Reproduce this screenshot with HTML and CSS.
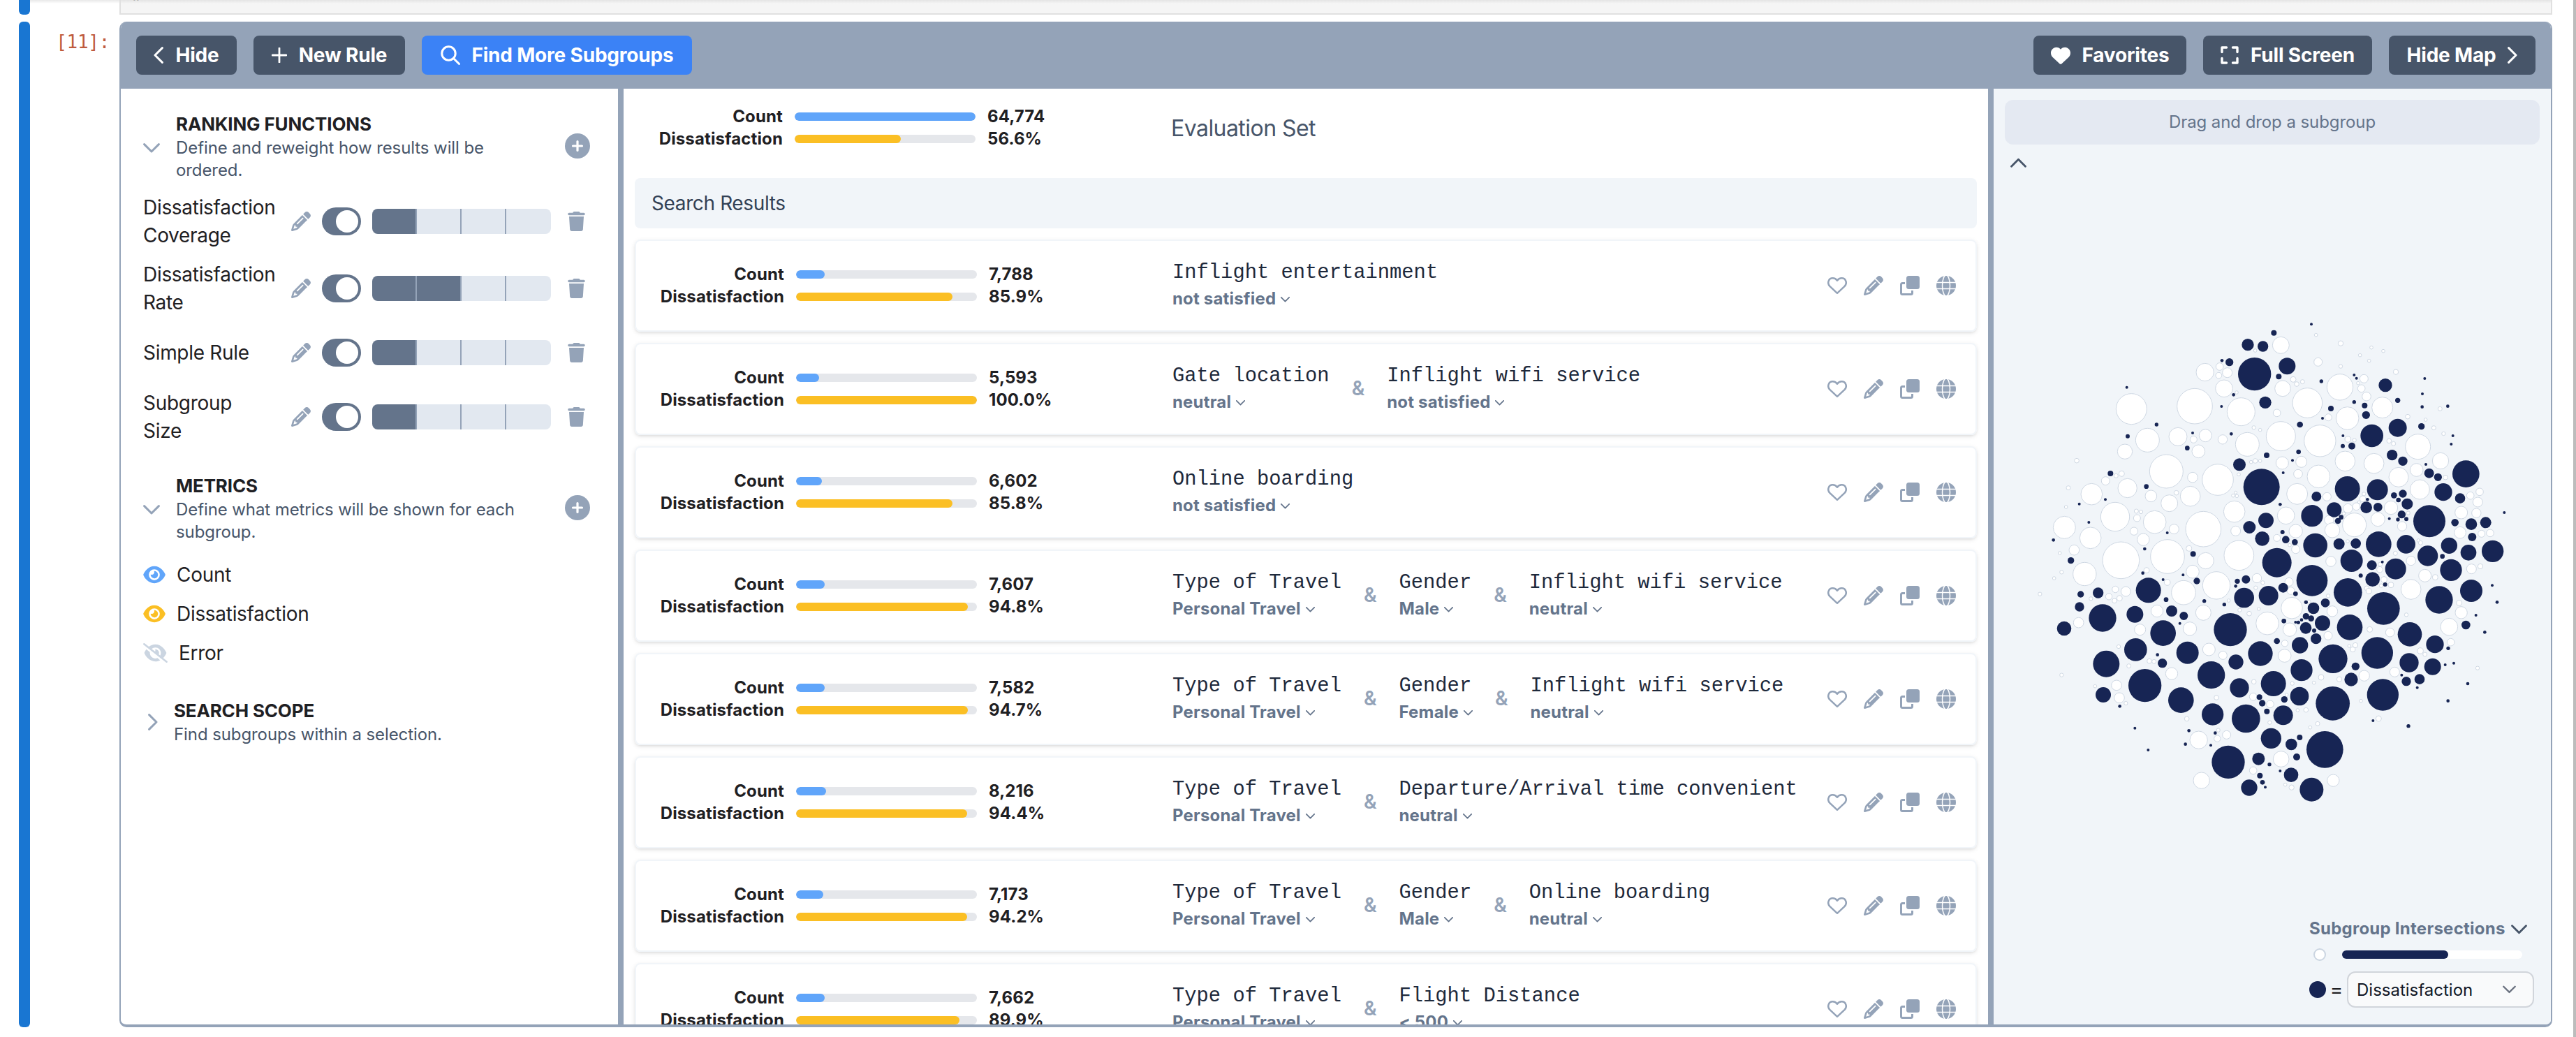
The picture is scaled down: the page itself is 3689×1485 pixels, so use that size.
FILE: index.html
```html
<!DOCTYPE html>
<html lang="en">
<head>
<meta charset="utf-8">
<title>Subgroup explorer</title>
<link rel="stylesheet" href="styles.css">
</head>
<body>
<svg class="sprite" width="0" height="0">
  <symbol id="heart" viewBox="0 0 28 28"><path d="M14 24.8 3.6 15.1C-.9 10.700 1.500 3.300 7.600 3.300c2.700 0 4.900 1.300 6.400 3.500 1.500-2.200 3.700-3.500 6.400-3.500 6.100 0 8.500 7.400 4 11.800z" fill="none" stroke="currentColor" stroke-width="2.500" stroke-linejoin="round"/></symbol>
  <symbol id="heart-solid" viewBox="0 32 512 448"><path d="M47.600 300.400L228.300 469.100c7.500 7 17.400 10.900 27.700 10.900s20.200-3.900 27.700-10.900L464.400 300.400c30.400-28.300 47.600-68 47.600-109.500v-5.800c0-69.900-50.500-129.500-119.400-141C347 36.500 300.600 51.400 268 84L256 96 244 84c-32.600-32.600-79-47.500-124.600-39.900C50.500 55.600 0 115.200 0 185.100v5.800c0 41.500 17.200 81.200 47.600 109.500z"/></symbol>
  <symbol id="pencil" viewBox="0 0 512 512"><path d="M410.3 231l11.3-11.3-33.9-33.9-62.1-62.1L291.7 89.8l-11.3 11.3-22.6 22.6L58.6 322.9c-10.4 10.4-18 23.3-22.2 37.4L1 480.7c-2.5 8.4-.2 17.5 6.1 23.7s15.3 8.5 23.7 6.1l120.3-35.4c14.1-4.2 27-11.8 37.4-22.2L387.7 253.7 410.3 231zM160 399.4l-9.100 22.700c-4 3.100-8.500 5.400-13.300 6.900L59.400 452l23-78.100c1.400-4.900 3.800-9.400 6.900-13.300l22.700-9.100v32c0 8.800 7.200 16 16 16h32zM362.7 18.7L348.3 33.2 325.7 55.8 314.3 67.1l33.9 33.9 62.1 62.1 33.9 33.9 11.3-11.3 22.6-22.600 14.500-14.500c25-25 25-65.500 0-90.500L453.300 18.700c-25-25-65.500-25-90.500 0zm-47.400 168l-144 144c-6.200 6.200-16.400 6.200-22.600 0s-6.200-16.400 0-22.600l144-144c6.200-6.200 16.400-6.200 22.600 0s6.200 16.400 0 22.600z"/></symbol>
  <symbol id="clone" viewBox="0 0 28 28"><rect x="9" y="0" width="19" height="19" rx="3.500"/><path d="M7 10.500H3.500a2 2 0 0 0-2 2v12a2 2 0 0 0 2 2h12a2 2 0 0 0 2-2V21" fill="none" stroke="currentColor" stroke-width="3"/></symbol>
  <symbol id="globe" viewBox="0 0 28 28"><circle cx="14" cy="14" r="14"/><g fill="none" stroke="#fff" stroke-width="1.500"><ellipse cx="14" cy="14" rx="5.500" ry="15"/><path d="M0 9.500H28M0 18.500H28"/></g></symbol>
  <symbol id="trash" viewBox="0 0 448 512"><path d="M135.200 17.700L128 32H32C14.300 32 0 46.300 0 64S14.300 96 32 96H416c17.700 0 32-14.300 32-32s-14.300-32-32-32H320l-7.200-14.300C307.400 6.800 296.300 0 284.200 0H163.800c-12.100 0-23.200 6.800-28.600 17.700zM416 128H32L53.200 467c1.600 25.300 22.600 45 47.900 45H346.900c25.300 0 46.300-19.700 47.900-45L416 128z"/></symbol>
  <symbol id="plus-circle" viewBox="0 0 36 36"><circle cx="18" cy="18" r="18"/><path d="M18 11.500v13M11.500 18h13" stroke="#fff" stroke-width="3.200" stroke-linecap="round"/></symbol>
  <symbol id="eye" viewBox="0 0 576 512"><path d="M288 32c-80.800 0-145.500 36.800-192.600 80.600C48.600 156 17.300 208 2.500 243.700c-3.300 7.900-3.300 16.700 0 24.600C17.300 304 48.600 356 95.400 399.400C142.500 443.200 207.200 480 288 480s145.500-36.800 192.600-80.600c46.800-43.500 78.100-95.400 93-131.100c3.300-7.900 3.300-16.700 0-24.600c-14.900-35.700-46.200-87.700-93-131.100C433.500 68.800 368.800 32 288 32zM144 256a144 144 0 1 1 288 0 144 144 0 1 1 -288 0zm144-64c0 35.300-28.700 64-64 64c-7.100 0-13.900-1.200-20.300-3.300c-5.500-1.800-11.900 1.600-11.700 7.400c.3 6.900 1.300 13.800 3.200 20.700c13.700 51.200 66.400 81.600 117.600 67.900s81.600-66.400 67.900-117.600c-11.100-41.500-47.800-69.400-88.600-71.100c-5.800-.2-9.200 6.100-7.400 11.700c2.100 6.400 3.300 13.200 3.300 20.300z"/></symbol>
  <symbol id="eye-slash" viewBox="0 0 640 512"><path d="M38.800 5.100C28.400-3.100 13.300-1.200 5.100 9.200S-1.200 34.700 9.200 42.900l592 464c10.400 8.200 25.500 6.300 33.700-4.100s6.300-25.500-4.100-33.700L525.600 386.700c39.600-40.600 66.400-86.100 79.900-118.400c3.300-7.900 3.300-16.700 0-24.600c-14.900-35.700-46.200-87.700-93-131.100C465.500 68.800 400.800 32 320 32c-68.200 0-125 26.300-169.300 60.800L38.800 5.100zM223.100 149.500C248.600 126.200 282.700 112 320 112c79.500 0 144 64.500 144 144c0 24.900-6.300 48.300-17.400 68.700L408 294.500c8.400-19.300 10.600-41.400 4.800-63.300c-11.100-41.500-47.800-69.400-88.600-71.100c-5.800-.2-9.200 6.100-7.400 11.700c2.100 6.400 3.300 13.200 3.300 20.300c0 10.200-2.400 19.800-6.600 28.300l-90.300-70.800zM373 389.900c-16.400 6.500-34.300 10.100-53 10.100c-79.500 0-144-64.500-144-144c0-6.900 .5-13.600 1.400-20.200L83.100 161.500C60.300 191.200 44 220.800 34.500 243.700c-3.300 7.900-3.300 16.700 0 24.600c14.900 35.700 46.200 87.700 93 131.100C174.500 443.200 239.200 480 320 480c47.800 0 89.900-12.900 126.200-32.500L373 389.900z"/></symbol>
  <symbol id="caret" viewBox="0 0 24 14"><path d="M1.600 1.600 12 12 22.400 1.600" fill="none" stroke="currentColor" stroke-width="3" stroke-linecap="round" stroke-linejoin="round"/></symbol>
  <symbol id="caret-small" viewBox="0 0 13 8"><path d="M.8.800 6.500 6.700 12.200.800" fill="none" stroke="currentColor" stroke-width="1.700" stroke-linecap="round" stroke-linejoin="round"/></symbol>
  <symbol id="caret-right" viewBox="0 0 14 24"><path d="M1.600 1.600 12 12 1.600 22.400" fill="none" stroke="currentColor" stroke-width="3" stroke-linecap="round" stroke-linejoin="round"/></symbol>
  <symbol id="caret-left" viewBox="0 0 14 24"><path d="M12.400 1.600 2 12 12.400 22.400" fill="none" stroke="currentColor" stroke-width="3" stroke-linecap="round" stroke-linejoin="round"/></symbol>
  <symbol id="plus" viewBox="0 0 22 22"><path d="M11 1v20M1 11h20" stroke="currentColor" stroke-width="2.800" stroke-linecap="round"/></symbol>
  <symbol id="search" viewBox="0 0 28 28"><g fill="none" stroke="currentColor" stroke-width="3" stroke-linecap="round"><circle cx="11.500" cy="11.500" r="9.700"/><path d="M18.700 18.700 26.500 26.500"/></g></symbol>
  <symbol id="expand" viewBox="0 0 26 26"><path d="M2 8.500V2h6.500M17.500 2H24v6.500M24 17.500V24h-6.500M8.500 24H2v-6.500" fill="none" stroke="currentColor" stroke-width="3.400" stroke-linecap="round" stroke-linejoin="round"/></symbol>
</svg>

<div class="notebook">
  <div class="cell cell-prev">
    <div class="marker"></div>
    <div class="input"><span class="code">"</span></div>
  </div>
  <div class="cell cell-current">
    <div class="marker"></div>
    <div class="prompt">[11]:</div>
    <div class="widget">
      <div class="toolbar">
        <button class="btn w-hide"><svg class="i-side"><use href="#caret-left"/></svg>Hide</button>
        <button class="btn w-rule"><svg class="i-plus"><use href="#plus"/></svg>New Rule</button>
        <button class="btn primary w-find"><svg class="i-28"><use href="#search"/></svg>Find More Subgroups</button>
        <span class="spacer"></span>
        <button class="btn w-fav"><svg class="i-heart"><use href="#heart-solid"/></svg>Favorites</button>
        <button class="btn w-full"><svg class="i-26"><use href="#expand"/></svg>Full Screen</button>
        <button class="btn w-map">Hide Map<svg class="i-side"><use href="#caret-right"/></svg></button>
      </div>
      <div class="panels">
        <aside class="sidebar">
          <div class="section-head">
            <svg class="toggle-caret"><use href="#caret"/></svg>
            <div class="section-text"><h2>Ranking Functions</h2><p>Define and reweight how results will be ordered.</p></div>
            <svg class="add"><use href="#plus-circle"/></svg>
          </div>
          <div class="rankings">
            <div class="ranking"><span class="name">Dissatisfaction Coverage</span><svg class="i-28"><use href="#pencil"/></svg><span class="switch"></span><span class="weights"><i class="on"></i><i></i><i></i><i></i></span><svg class="i-trash"><use href="#trash"/></svg></div>
            <div class="ranking"><span class="name">Dissatisfaction Rate</span><svg class="i-28"><use href="#pencil"/></svg><span class="switch"></span><span class="weights"><i class="on"></i><i class="on"></i><i></i><i></i></span><svg class="i-trash"><use href="#trash"/></svg></div>
            <div class="ranking"><span class="name">Simple Rule</span><svg class="i-28"><use href="#pencil"/></svg><span class="switch"></span><span class="weights"><i class="on"></i><i></i><i></i><i></i></span><svg class="i-trash"><use href="#trash"/></svg></div>
            <div class="ranking"><span class="name">Subgroup<br>Size</span><svg class="i-28"><use href="#pencil"/></svg><span class="switch"></span><span class="weights"><i class="on"></i><i></i><i></i><i></i></span><svg class="i-trash"><use href="#trash"/></svg></div>
          </div>
          <div class="section-head metrics-head">
            <svg class="toggle-caret"><use href="#caret"/></svg>
            <div class="section-text"><h2>Metrics</h2><p>Define what metrics will be shown for each subgroup.</p></div>
            <svg class="add"><use href="#plus-circle"/></svg>
          </div>
          <div class="metric-list">
            <div class="metric-item"><svg class="i-eye blue"><use href="#eye"/></svg>Count</div>
            <div class="metric-item"><svg class="i-eye amber"><use href="#eye"/></svg>Dissatisfaction</div>
            <div class="metric-item"><svg class="i-eye-slash"><use href="#eye-slash"/></svg>Error</div>
          </div>
          <div class="section-head scope-head">
            <svg class="scope-caret"><use href="#caret-right"/></svg>
            <div class="section-text"><h2>Search Scope</h2><p>Find subgroups within a selection.</p></div>
          </div>
        </aside>

        <main class="results">
          <div class="overall">
            <div class="stats">
              <b>Count</b><span class="bar"><i class="blue-bar" style="width:100%"></i></span><b>64,774</b>
              <b>Dissatisfaction</b><span class="bar"><i class="amber-bar" style="width:58.5%"></i></span><b>56.6%</b>
            </div>
            <div class="overall-name">Evaluation Set</div>
          </div>
          <div class="results-title">Search Results</div>

          <div class="card">
            <div class="stats">
              <b>Count</b><span class="bar"><i class="blue-bar" style="width:16%"></i></span><b>7,788</b>
              <b>Dissatisfaction</b><span class="bar"><i class="amber-bar" style="width:86.5%"></i></span><b>85.9%</b>
            </div>
            <div class="rule">
              <div class="feature"><code>Inflight entertainment</code><span>not satisfied<svg><use href="#caret-small"/></svg></span></div>
            </div>
            <div class="actions"><svg><use href="#heart"/></svg><svg><use href="#pencil"/></svg><svg><use href="#clone"/></svg><svg><use href="#globe"/></svg></div>
          </div>

          <div class="card">
            <div class="stats">
              <b>Count</b><span class="bar"><i class="blue-bar" style="width:12.6%"></i></span><b>5,593</b>
              <b>Dissatisfaction</b><span class="bar"><i class="amber-bar" style="width:100%"></i></span><b>100.0%</b>
            </div>
            <div class="rule">
              <div class="feature"><code>Gate location</code><span>neutral<svg><use href="#caret-small"/></svg></span></div>
              <em>&amp;</em>
              <div class="feature"><code>Inflight wifi service</code><span>not satisfied<svg><use href="#caret-small"/></svg></span></div>
            </div>
            <div class="actions"><svg><use href="#heart"/></svg><svg><use href="#pencil"/></svg><svg><use href="#clone"/></svg><svg><use href="#globe"/></svg></div>
          </div>

          <div class="card">
            <div class="stats">
              <b>Count</b><span class="bar"><i class="blue-bar" style="width:14.2%"></i></span><b>6,602</b>
              <b>Dissatisfaction</b><span class="bar"><i class="amber-bar" style="width:86.4%"></i></span><b>85.8%</b>
            </div>
            <div class="rule">
              <div class="feature"><code>Online boarding</code><span>not satisfied<svg><use href="#caret-small"/></svg></span></div>
            </div>
            <div class="actions"><svg><use href="#heart"/></svg><svg><use href="#pencil"/></svg><svg><use href="#clone"/></svg><svg><use href="#globe"/></svg></div>
          </div>

          <div class="card">
            <div class="stats">
              <b>Count</b><span class="bar"><i class="blue-bar" style="width:15.7%"></i></span><b>7,607</b>
              <b>Dissatisfaction</b><span class="bar"><i class="amber-bar" style="width:95%"></i></span><b>94.8%</b>
            </div>
            <div class="rule">
              <div class="feature"><code>Type of Travel</code><span>Personal Travel<svg><use href="#caret-small"/></svg></span></div>
              <em>&amp;</em>
              <div class="feature"><code>Gender</code><span>Male<svg><use href="#caret-small"/></svg></span></div>
              <em>&amp;</em>
              <div class="feature"><code>Inflight wifi service</code><span>neutral<svg><use href="#caret-small"/></svg></span></div>
            </div>
            <div class="actions"><svg><use href="#heart"/></svg><svg><use href="#pencil"/></svg><svg><use href="#clone"/></svg><svg><use href="#globe"/></svg></div>
          </div>

          <div class="card">
            <div class="stats">
              <b>Count</b><span class="bar"><i class="blue-bar" style="width:15.7%"></i></span><b>7,582</b>
              <b>Dissatisfaction</b><span class="bar"><i class="amber-bar" style="width:94.9%"></i></span><b>94.7%</b>
            </div>
            <div class="rule">
              <div class="feature"><code>Type of Travel</code><span>Personal Travel<svg><use href="#caret-small"/></svg></span></div>
              <em>&amp;</em>
              <div class="feature"><code>Gender</code><span>Female<svg><use href="#caret-small"/></svg></span></div>
              <em>&amp;</em>
              <div class="feature"><code>Inflight wifi service</code><span>neutral<svg><use href="#caret-small"/></svg></span></div>
            </div>
            <div class="actions"><svg><use href="#heart"/></svg><svg><use href="#pencil"/></svg><svg><use href="#clone"/></svg><svg><use href="#globe"/></svg></div>
          </div>

          <div class="card">
            <div class="stats">
              <b>Count</b><span class="bar"><i class="blue-bar" style="width:16.6%"></i></span><b>8,216</b>
              <b>Dissatisfaction</b><span class="bar"><i class="amber-bar" style="width:94.7%"></i></span><b>94.4%</b>
            </div>
            <div class="rule">
              <div class="feature"><code>Type of Travel</code><span>Personal Travel<svg><use href="#caret-small"/></svg></span></div>
              <em>&amp;</em>
              <div class="feature"><code>Departure/Arrival time convenient</code><span>neutral<svg><use href="#caret-small"/></svg></span></div>
            </div>
            <div class="actions"><svg><use href="#heart"/></svg><svg><use href="#pencil"/></svg><svg><use href="#clone"/></svg><svg><use href="#globe"/></svg></div>
          </div>

          <div class="card">
            <div class="stats">
              <b>Count</b><span class="bar"><i class="blue-bar" style="width:15.1%"></i></span><b>7,173</b>
              <b>Dissatisfaction</b><span class="bar"><i class="amber-bar" style="width:94.5%"></i></span><b>94.2%</b>
            </div>
            <div class="rule">
              <div class="feature"><code>Type of Travel</code><span>Personal Travel<svg><use href="#caret-small"/></svg></span></div>
              <em>&amp;</em>
              <div class="feature"><code>Gender</code><span>Male<svg><use href="#caret-small"/></svg></span></div>
              <em>&amp;</em>
              <div class="feature"><code>Online boarding</code><span>neutral<svg><use href="#caret-small"/></svg></span></div>
            </div>
            <div class="actions"><svg><use href="#heart"/></svg><svg><use href="#pencil"/></svg><svg><use href="#clone"/></svg><svg><use href="#globe"/></svg></div>
          </div>

          <div class="card">
            <div class="stats">
              <b>Count</b><span class="bar"><i class="blue-bar" style="width:15.8%"></i></span><b>7,662</b>
              <b>Dissatisfaction</b><span class="bar"><i class="amber-bar" style="width:90.4%"></i></span><b>89.9%</b>
            </div>
            <div class="rule">
              <div class="feature"><code>Type of Travel</code><span>Personal Travel<svg><use href="#caret-small"/></svg></span></div>
              <em>&amp;</em>
              <div class="feature"><code>Flight Distance</code><span>&lt; 500<svg><use href="#caret-small"/></svg></span></div>
            </div>
            <div class="actions"><svg><use href="#heart"/></svg><svg><use href="#pencil"/></svg><svg><use href="#clone"/></svg><svg><use href="#globe"/></svg></div>
          </div>
        </main>

        <section class="map">
          <div class="dropzone">Drag and drop a subgroup</div>
          <svg class="map-caret"><use href="#caret"/></svg>
          <svg id="bubbles" class="bubbles" viewBox="-75 -570 2394 3681"></svg>
          <div class="legend">
            <div class="legend-title">Subgroup Intersections<svg><use href="#caret"/></svg></div>
            <div class="legend-size"><span class="dot-empty"></span><span class="legend-bar"><i></i></span></div>
            <div class="legend-color"><span class="dot-full"></span><span class="equals">=</span><div class="select">Dissatisfaction<svg><use href="#caret"/></svg></div></div>
          </div>
        </section>
      </div>
    </div>
  </div>
</div>
<div class="scrollbar"></div>
<script src="bubbles.js"></script>
</body>
</html>
```
FILE: styles.css
```css
* { box-sizing: border-box; }

body {
  margin: 0;
  height: 1485px;
  display: flex;
  overflow: hidden;
  background: #fff;
  color: #1f2023;
  font-family: Inter, "Liberation Sans", sans-serif;
  font-size: 28px;
}

svg { fill: currentColor; flex: none; display: block; }
.sprite { position: absolute; }

.notebook { flex: 1; padding: 0 30px 0 27px; }
.scrollbar { width: 4px; background: #bcbcbc; }

/* notebook cells */
.cell { display: flex; }
.marker { width: 16px; background: #1976d2; border-radius: 6px; flex: none; }
.cell-prev { height: 21px; margin-bottom: 10px; background: linear-gradient(rgba(0,0,0,.09), rgba(0,0,0,0) 5px); }
.cell-prev .marker { border-radius: 0 0 6px 6px; }
.input {
  flex: 1;
  margin-left: 128px;
  overflow: hidden;
  background: linear-gradient(rgba(0,0,0,.07), rgba(0,0,0,0) 5px), #f5f5f5;
  border: solid #e0e0e0;
  border-width: 0 2px 2px;
}
.code { display: block; margin: -11px 0 0 14px; font: 26px/30px "DejaVu Sans Mono", monospace; }
.cell-current { height: 1440px; }
.prompt {
  width: 128px;
  padding: 14px 14px 0 0;
  text-align: right;
  color: #bf5b3d;
  font: 26px/30px "DejaVu Sans Mono", monospace;
  letter-spacing: -.3px;
}

/* widget frame */
.widget {
  flex: 1;
  display: flex;
  flex-direction: column;
  border: solid #94a3b8;
  border-width: 0 2px 4px;
  border-radius: 10px;
  overflow: hidden;
}
.toolbar {
  height: 96px;
  flex: none;
  display: flex;
  align-items: center;
  gap: 24px;
  padding: 0 22px;
  background: #94a3b8;
}
.btn {
  height: 56px;
  display: flex;
  align-items: center;
  justify-content: center;
  gap: 17px;
  padding: 0;
  border: 0;
  border-radius: 8px;
  background: #475569;
  color: #fff;
  font: 700 28px/40px Inter, sans-serif;
  letter-spacing: -.2px;
}
.primary { background: #3b82f6; }
.spacer { flex: 1; }
.w-hide { width: 144px; }
.w-rule { width: 217px; }
.w-find { width: 387px; }
.w-fav { width: 219px; }
.w-full { width: 242px; }
.w-map { width: 210px; }
.i-side { width: 14px; height: 24px; }
.i-plus { width: 22px; height: 22px; }
.i-28 { width: 28px; height: 28px; }
.i-26 { width: 26px; height: 26px; }
.i-heart { width: 28px; height: 25px; }

.panels { flex: 1; min-height: 0; display: flex; }

/* left panel */
.sidebar { width: 712px; flex: none; padding: 33px 40px 0 32px; }
.section-head { display: flex; align-items: center; color: #94a3b8; }
.toggle-caret { width: 24px; height: 14px; margin: 3px 23px 0 0; }
.section-text { width: 530px; margin-right: 27px; }
.section-text h2 {
  margin: 0;
  color: #1f2023;
  font-size: 26px;
  line-height: 36px;
  font-weight: 700;
  letter-spacing: -.17px;
  text-transform: uppercase;
}
.section-text p { margin: 0; color: #475569; font-size: 24px; line-height: 32px; letter-spacing: -.09px; }
.add { width: 36px; height: 36px; margin-bottom: 2px; }
.rankings { margin-top: 17px; display: flex; flex-direction: column; gap: 16px; }
.ranking {
  display: grid;
  grid-template-columns: 212px 44px 72px 280px 25px;
  align-items: center;
  min-height: 72px;
  color: #94a3b8;
}
.name { color: #1f2023; line-height: 40px; letter-spacing: -.3px; }
.switch { width: 56px; height: 40px; padding: 4px 3px; border-radius: 20px; background: #64748b; }
.switch::after { content: ""; display: block; width: 32px; height: 32px; margin-left: 17px; border-radius: 50%; background: #fff; }
.weights { width: 256px; height: 36px; display: flex; overflow: hidden; border-radius: 8px; }
.weights i { width: 64px; background: #e2e8f0; border-right: 2px solid #94a3b8; }
.weights i:last-child { border: 0; }
.weights .on { background: #64748b; }
.i-trash { width: 25px; height: 28px; }
.metrics-head { margin-top: 41px; }
.metric-list { margin-top: 17px; }
.metric-item { height: 56px; display: flex; align-items: center; gap: 16px; letter-spacing: -.3px; }
.i-eye { width: 32px; height: 28px; }
.i-eye-slash { width: 35px; height: 28px; color: #cbd5e1; }
.blue { color: #60a5fa; }
.amber { color: #fbbf24; }
.scope-head { margin-top: 37px; }
.scope-caret { width: 14px; height: 24px; margin: 0 23px 0 7px; }

/* results list */
.results { width: 1970px; flex: none; padding: 0 16px; border: solid #94a3b8; border-width: 0 8px; overflow: hidden; }
.overall { height: 128px; padding-bottom: 16px; display: flex; align-items: center; }
.overall-name { color: #475569; font-size: 32px; letter-spacing: -.55px; }
.results-title {
  height: 72px;
  padding-left: 24px;
  border-radius: 8px;
  background: #f1f5f9;
  color: #334155;
  line-height: 72px;
  letter-spacing: -.38px;
}
.card {
  height: 132px;
  margin-top: 16px;
  padding-right: 28px;
  display: flex;
  align-items: center;
  border: 2px solid #f1f5f9;
  border-radius: 8px;
  box-shadow: 0 2px 6px rgba(0,0,0,.1), 0 2px 4px -2px rgba(0,0,0,.1);
}
.stats {
  width: 768px;
  flex: none;
  display: grid;
  grid-template-columns: 212px 259px 1fr;
  column-gap: 17px;
  align-items: center;
  font-size: 24px;
  line-height: 32px;
  letter-spacing: .12px;
}
.stats b { font-weight: 700; }
.stats b:nth-child(3n+1) { text-align: right; }
.bar { height: 12px; border-radius: 6px; background: #e5e7eb; overflow: hidden; }
.bar i { display: block; height: 12px; border-radius: 6px; }
.blue-bar { background: #60a5fa; }
.amber-bar { background: #fbbf24; }
.rule { flex: 1; display: flex; align-items: center; gap: 32px; }
.rule em { margin-top: -3px; color: #94a3b8; font-style: normal; font-weight: 600; }
.feature code {
  display: block;
  padding-top: 4px;
  color: #1e293b;
  font: 28.8px/34px "Liberation Mono", monospace;
  white-space: pre;
}
.feature span {
  display: flex;
  align-items: center;
  gap: 7px;
  color: #64748b;
  font-size: 24px;
  line-height: 40px;
  font-weight: 700;
  letter-spacing: .18px;
}
.feature svg { width: 13px; height: 8px; margin-top: 2px; }
.actions { display: flex; gap: 24px; color: #94a3b8; }
.actions svg { width: 28px; height: 28px; }

/* map panel */
.map { flex: 1; position: relative; background: #f1f5f9; }
.dropzone {
  height: 64px;
  margin: 16px 16px 0;
  border-radius: 12px;
  background: #e4e9f2;
  color: #64748b;
  font-size: 24px;
  line-height: 64px;
  text-align: center;
  letter-spacing: -.08px;
}
.map-caret { width: 23px; height: 14px; margin: 19px 0 0 24px; transform: rotate(180deg); color: #475569; }
.bubbles { width: 798px; height: 1227px; }
.bubbles .in { fill: #172554; }
.bubbles .out { fill: #fff; stroke: #cbd5e1; stroke-width: 2.8; }

.legend { position: absolute; left: 452px; bottom: 24px; width: 322px; }
.legend-title {
  height: 32px;
  display: flex;
  align-items: center;
  gap: 8px;
  color: #64748b;
  font-size: 24px;
  font-weight: 700;
  letter-spacing: .25px;
}
.legend-title svg { width: 23px; height: 14px; margin-top: 3px; color: #475569; }
.legend-size { height: 44px; display: flex; align-items: center; gap: 23px; padding-left: 6px; }
.dot-empty { width: 18px; height: 18px; border: 2px solid #cbd5e1; border-radius: 50%; background: #fff; }
.legend-bar { width: 258px; height: 12px; border-radius: 6px; background: #fff; }
.legend-bar i { display: block; width: 59%; height: 12px; border-radius: 6px; background: #172554; }
.legend-color { display: flex; align-items: center; margin-top: 2px; }
.dot-full { width: 24px; height: 24px; border-radius: 50%; background: #172554; }
.equals { width: 30px; text-align: center; }
.select {
  width: 268px;
  height: 52px;
  display: flex;
  align-items: center;
  justify-content: space-between;
  padding: 0 24px 0 12px;
  border: 2px solid #d1d5db;
  border-radius: 12px;
  background: #f9fafb;
  color: #111827;
  font-size: 24px;
}
.select svg { width: 19px; height: 12px; color: #6b7280; }
```
FILE: bubbles.js
```js
// Each entry is "x,y,radius"; blocks share a local origin.
const blocks = [
  { x: 0, y: 0,
    inside: "1017,191,26 906,259,7 938,266,17 1046,317,71 497,374,6 956,406,7 904,456,6 625,534,8 501,584,9 780,570,6 757,635,10 946,574,7 981,706,27 427,744,12 581,800,10 1076,802,78 405,856,6 293,875,6 334,954,6 182,1030,7 671,999,6 1024,975,27 1079,1024,31",
    outside: "1049,216,7 833,309,38 896,285,16 929,311,21 892,323,13 915,379,37 969,396,7 517,467,66 789,455,76 988,479,60 586,601,51 717,586,39 784,598,15 835,581,27 909,598,20 805,649,28 489,650,32 1043,547,8 1070,557,7 1015,619,51 282,689,10 667,735,72 780,761,22 888,771,67 1031,695,7 1049,690,10 1070,690,7 978,748,7 965,826,6 954,839,7 970,841,7 475,745,12 451,754,9 406,776,18 346,833,46 500,807,41 246,806,9 236,888,7 601,841,25 710,827,10 680,872,36 770,842,43 447,930,62 538,906,9 558,909,8 541,936,15 617,953,49 528,992,17 568,1028,26 700,983,21 826,983,76 959,908,46 965,991,21 229,976,48 341,1021,46" },
  { x: 1080, y: 0,
    inside: "210,103,6 49,140,12 2,198,23 106,283,36 70,328,12 253,348,8 394,321,6 404,335,6 528,365,29 697,336,6 687,402,6 686,458,7 796,455,7 394,437,8 439,452,12 581,430,11 294,465,12 445,493,17 258,507,6 12,439,26 161,534,13 346,582,6 345,626,9 384,626,15 470,582,49 581,548,39 683,542,14 818,582,6 811,618,6 155,651,10 129,688,6 18,666,12 89,741,6 557,665,23 603,691,20 702,705,6 716,743,21 754,760,17 874,746,58 365,810,54 494,814,45 232,843,21 76,877,7 308,900,32 451,856,7 446,890,25 496,889,19 565,838,13 603,831,17 584,858,10 622,875,24 777,824,38 849,851,22 213,926,47 338,932,10 324,948,13 15,946,33 545,938,6 598,920,17 582,942,8 618,940,9 717,949,69 827,955,16 897,962,25 959,955,24 1039,912,6 901,1017,18 86,996,9 100,1028,16 139,1039,13 329,1047,24 401,1045,22 499,1048,55 617,1048,40 227,1053,52 802,1054,35",
    outside: "79,193,36 230,149,7 336,185,11 468,203,7 519,218,7 419,236,7 458,260,7 239,265,18 336,284,8 573,308,11 132,340,12 147,360,10 172,350,9 87,379,34 333,373,56 436,337,18 411,356,7 425,379,16 447,413,19 193,441,64 515,461,45 62,484,16 283,503,15 365,507,49 624,500,10 763,466,9 701,513,7 736,548,9 778,573,8 79,584,63 247,604,68 367,597,13 395,601,8 544,604,10 563,616,9 668,629,54 355,691,43 479,701,43 765,690,35 85,699,27 167,694,24 153,746,19 241,757,49 585,760,42 662,729,28 786,761,10 149,832,45 277,844,18 436,832,8 431,853,13 415,867,6 367,894,20 403,886,16 349,916,7 676,813,42 552,891,29 893,839,16 933,823,16 925,867,21 854,912,27 919,914,20 626,914,8 101,925,37 286,944,20 300,988,32 395,965,51 496,941,30 600,971,20 143,992,29 62,1021,15 117,1052,7 366,1035,7 670,1032,7 679,1042,9 849,998,25 941,1003,15 978,1000,16" },
  { x: 0, y: 1050,
    inside: "574,18,7 782,40,12 257,68,14 566,122,7 653,150,6 739,130,6 798,156,14 972,157,11 1009,149,18 965,178,7 590,196,54 299,213,14 374,207,23 294,267,20 393,315,59 666,236,10 830,242,8 916,257,8 1001,228,43 532,299,36 690,285,24 742,306,18 725,338,6 228,360,31 653,380,55 942,365,71 535,451,49 758,464,48 409,512,57 629,473,7 650,509,20 575,605,71 860,560,59 966,504,32 1071,468,53 981,615,41 396,645,33 730,668,55 467,694,7 866,729,47 1009,747,61 1067,655,12 1079,681,14 532,788,6 589,882,6 764,799,7 749,857,7 877,809,7 858,862,6 933,934,71 1063,920,27 1069,992,12 1023,1044,35",
    outside: "209,36,7 271,23,22 316,126,50 472,67,79 672,51,73 764,16,12 836,69,35 979,46,64 780,116,28 582,110,12 217,118,8 185,144,7 124,212,8 671,162,13 741,206,52 882,175,59 1056,144,20 1051,185,8 935,240,7 448,192,14 493,201,21 420,223,14 466,230,12 444,241,10 343,232,8 290,335,22 627,285,26 826,292,33 982,281,8 1023,296,10 1064,276,7 554,365,24 768,361,29 850,450,27 910,475,18 462,438,8 506,521,9 594,500,10 614,502,9 690,554,26 217,560,8 361,608,7 453,604,22 465,658,22 493,681,8 882,657,10 1043,589,10 1040,653,16 755,748,10 806,839,38 890,797,8 886,833,14 926,817,18 818,1013,35 1040,970,16" },
  { x: 1080, y: 1050,
    inside: "62,77,63 383,69,48 470,88,21 515,74,6 572,104,45 710,48,44 773,50,10 885,34,34 989,28,47 810,109,47 422,133,9 473,149,31 527,171,9 213,154,67 89,185,21 142,211,10 26,219,42 367,205,61 187,247,8 219,273,25 270,250,19 187,308,14 209,317,13 168,323,7 154,334,8 142,333,6 92,328,10 186,358,25 222,369,9 258,337,33 230,404,23 62,414,13 161,432,35 375,355,55 520,274,70 759,237,59 897,198,48 987,175,6 1008,247,7 917,303,6 955,376,7 874,345,19 633,385,52 741,428,38 798,445,8 303,490,62 493,465,68 400,523,17 381,579,29 630,507,41 731,524,36 785,516,6 822,509,6 598,560,6 618,587,20 675,578,22 665,614,6 882,597,7 797,671,7 627,779,8 168,539,47 47,597,54 159,651,40 94,665,14 89,733,42 19,716,12 302,682,73 517,645,68 475,756,6 37,832,44 160,828,12 124,858,25 147,912,15 268,880,79 30,944,8 76,972,6 123,989,31 211,1052,51 0,1021,10 12,1042,6",
    outside: "143,20,18 294,72,22 571,37,9 506,84,9 504,107,13 638,69,20 698,133,27 742,140,12 898,104,21 936,93,11 114,160,18 122,198,16 1,163,8 522,150,13 552,173,12 510,176,8 448,187,10 457,199,12 638,192,43 845,250,12 854,292,26 802,353,37 618,301,8 126,272,46 21,338,49 117,365,29 282,220,8 200,244,7 300,286,23 282,391,18 96,424,14 95,477,28 461,364,12 548,377,19 373,435,7 388,450,11 399,432,11 678,456,13 698,471,9 809,419,16 568,547,21 924,530,8 252,570,12 221,593,7 330,578,11 437,563,23 128,596,8 104,645,7 33,685,16 151,711,7 187,710,10 31,764,8 423,671,7 237,769,9 205,785,7 499,747,12 80,921,34 98,1031,7 125,1043,11 304,1013,26" }
];

const svg = document.getElementById("bubbles");
for (const kind of ["outside", "inside"]) {
  for (const block of blocks) {
    for (const entry of block[kind].split(" ")) {
      const [x, y, r] = entry.split(",").map(Number);
      const c = document.createElementNS("http://www.w3.org/2000/svg", "circle");
      c.setAttribute("cx", x + block.x);
      c.setAttribute("cy", y + block.y);
      c.setAttribute("r", r);
      c.setAttribute("class", kind === "inside" ? "in" : "out");
      svg.append(c);
    }
  }
}
```
